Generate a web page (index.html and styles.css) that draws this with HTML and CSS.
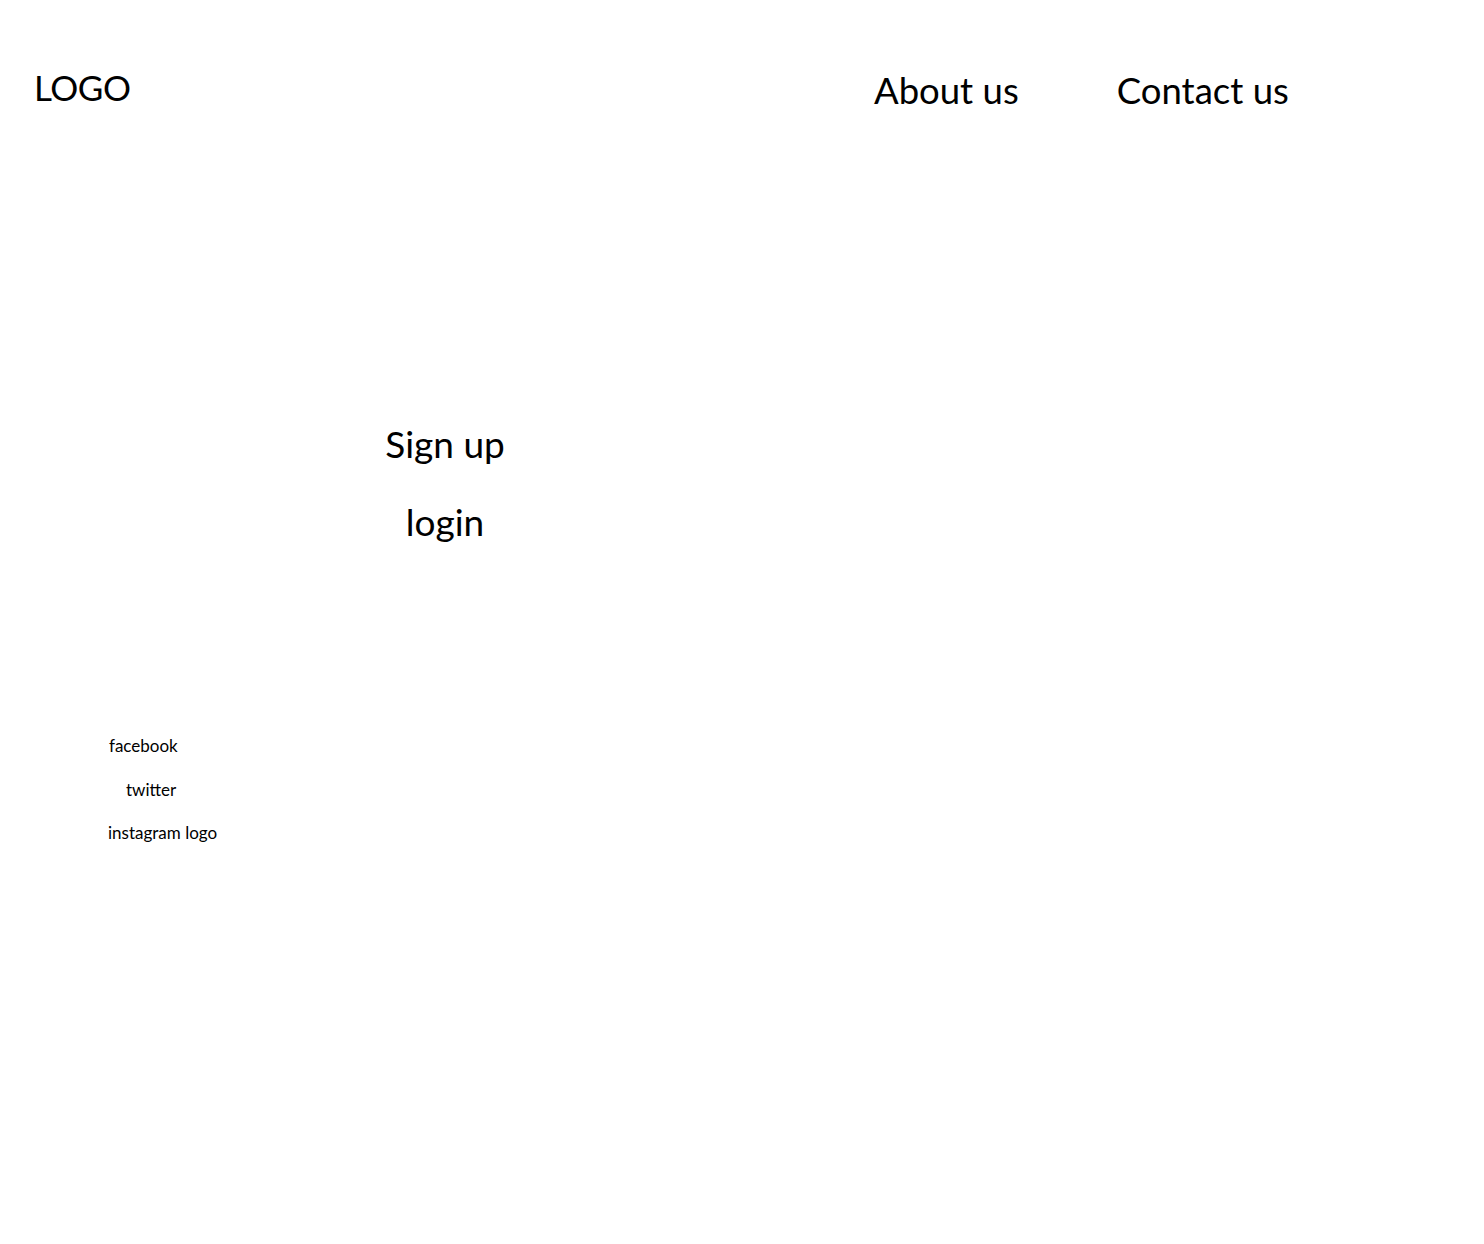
FILE: index.html
```html
<!DOCTYPE html>
<html lang="en">
<head>
<meta charset="utf-8">
<title>Home</title>
<link rel="stylesheet" href="styles.css">
</head>
<body>
<header class="header">
  <div class="logo">LOGO</div>
  <nav class="nav">
    <a class="nav-link" href="#">About us</a>
    <a class="nav-link" href="#">Contact us</a>
  </nav>
</header>
<main class="auth">
  <a class="auth-link" href="#">Sign up</a>
  <a class="auth-link" href="#">login</a>
</main>
<footer class="social">
  <a class="social-link social-facebook" href="#">facebook</a>
  <a class="social-link social-twitter" href="#">twitter</a>
  <a class="social-link social-instagram" href="#">instagram logo</a>
</footer>
</body>
</html>
```
FILE: styles.css
```css
html, body {
  margin: 0;
  padding: 0;
  background: #ffffff;
  color: #000000;
  font-family: Lato, "Open Sans", "Liberation Sans", sans-serif;
}

a {
  color: inherit;
  text-decoration: none;
}

.header {
  display: flex;
  align-items: flex-start;
  padding: 67px 0 0 34px;
}

.logo {
  flex: none;
  width: 840px;
  font-size: 35px;
  line-height: 40px;
  letter-spacing: -0.5px;
}

.nav {
  display: flex;
  gap: 98px;
  padding-top: 3px;
}

.nav-link {
  font-size: 36.5px;
  line-height: 40px;
}

.auth {
  display: flex;
  flex-direction: column;
  align-items: center;
  gap: 38px;
  width: 200px;
  margin: 314px 0 0 345px;
}

.auth-link {
  font-size: 37px;
  line-height: 40px;
}

.social {
  display: flex;
  flex-direction: column;
  align-items: flex-start;
  gap: 23.5px;
  margin: 194px 0 0 108px;
}

.social-link {
  font-size: 17px;
  line-height: 20px;
}

.social-facebook { margin-left: 1px; }
.social-twitter { margin-left: 18px; }
.social-instagram { margin-left: 0; }
```
